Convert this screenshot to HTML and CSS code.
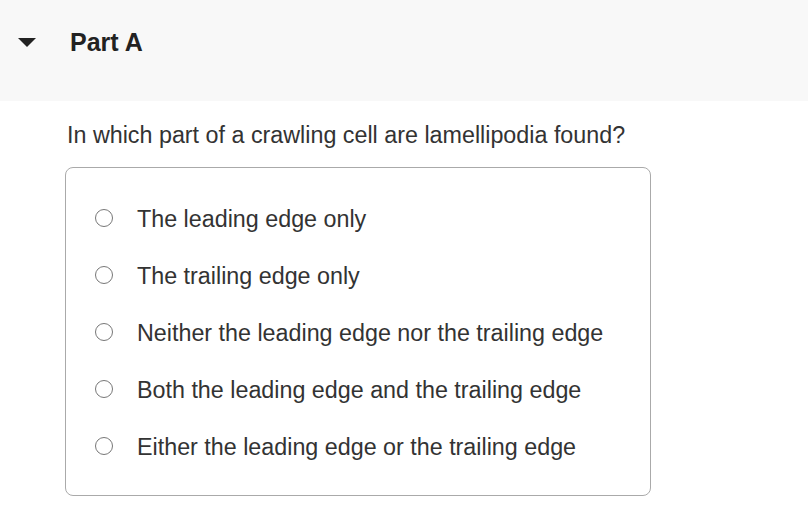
FILE: index.html
```html
<!DOCTYPE html>
<html>
<head>
<meta charset="utf-8">
<link rel="stylesheet" href="styles.css">
</head>
<body>
<div class="header">
  <svg class="caret" width="18" height="9" viewBox="0 0 18 9"><path d="M0 0 H18 L9 9 Z" fill="#222"/></svg>
  <span class="title">Part A</span>
</div>
<div class="content">
  <p class="question">In which part of a crawling cell are lamellipodia found?</p>
  <div class="options">
    <label class="option"><span class="radio"></span><span class="label">The leading edge only</span></label>
    <label class="option"><span class="radio"></span><span class="label">The trailing edge only</span></label>
    <label class="option"><span class="radio"></span><span class="label">Neither the leading edge nor the trailing edge</span></label>
    <label class="option"><span class="radio"></span><span class="label">Both the leading edge and the trailing edge</span></label>
    <label class="option"><span class="radio"></span><span class="label">Either the leading edge or the trailing edge</span></label>
  </div>
</div>
</body>
</html>
```
FILE: styles.css
```css
html, body { margin: 0; padding: 0; background: #fff; }
body { font-family: "Liberation Sans", Arial, sans-serif; color: #333; }
.header {
  height: 101px;
  background: #f8f8f8;
  display: flex;
  align-items: center;
  padding-left: 18px;
  box-sizing: border-box;
}
.caret { margin-top: -17px; }
.title {
  margin-left: 34px;
  margin-top: -16px;
  font-weight: bold;
  font-size: 25px;
  color: #222;
}
.content { padding-left: 65px; padding-top: 22px; }
.question {
  margin: 0 0 0 2px;
  font-size: 23.3px;
  line-height: 24px;
}
.options {
  margin-top: 20px;
  width: 586px;
  height: 329px;
  box-sizing: border-box;
  border: 1px solid #aaa;
  border-radius: 8px;
  padding-top: 38px;
  display: flex;
  flex-direction: column;
  gap: 33px;
}
.option {
  display: flex;
  align-items: center;
  height: 24px;
  padding-left: 29px;
  font-size: 23.3px;
}
.label { position: relative; top: 1px; }
.radio {
  width: 16px;
  height: 16px;
  border: 1px solid #777;
  border-radius: 50%;
  margin-right: 24px;
  flex: none;
}
```
